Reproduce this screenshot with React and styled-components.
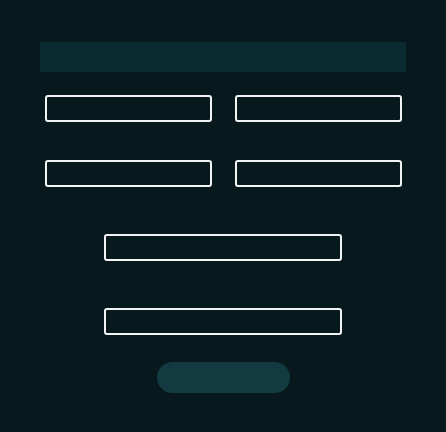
import styled, { createGlobalStyle } from "styled-components";

const GlobalStyle = createGlobalStyle`
	body {
		margin: 0;
		background: #08191d;
		font-family: "Liberation Sans", Arial, sans-serif;
	}
`;

const App = () => {
	return (
		<>
			<GlobalStyle />
			<Page>
				<Header />
				<Grid>
					<Field type="text" />
					<Field type="text" />
					<Field type="text" />
					<Field type="text" />
				</Grid>
				<Stack>
					<Field type="email" wide />
					<Field type="password" wide />
				</Stack>
				<Submit type="submit" />
			</Page>
		</>
	);
};

export default App;

const Page = styled.form`
	display: flex;
	flex-direction: column;
	align-items: center;
	padding: 42px 40px 0;
	height: 432px;
	box-sizing: border-box;
`;

const Header = styled.div`
	align-self: stretch;
	height: 30px;
	background: #0a2a30;
`;

const Grid = styled.div`
	align-self: stretch;
	display: grid;
	grid-template-columns: 1fr 1fr;
	column-gap: 23px;
	row-gap: 38px;
	padding: 0 4.5px;
	margin-top: 22.5px;
`;

const Field = styled.input`
	box-sizing: border-box;
	width: ${(props) => (props.wide ? "238px" : "100%")};
	height: 27px;
	margin: 0;
	padding: 0 6px;
	background: transparent;
	border: 2px solid #f2f4f4;
	border-radius: 3px;
	color: #fff;
	outline: none;
`;

const Stack = styled.div`
	display: flex;
	flex-direction: column;
	align-items: center;
	gap: 47px;
	margin-top: 47px;
`;

const Submit = styled.button`
	width: 133px;
	height: 31.5px;
	margin-top: 27px;
	border: none;
	border-radius: 16px;
	background: #123a40;
	cursor: pointer;
`;
